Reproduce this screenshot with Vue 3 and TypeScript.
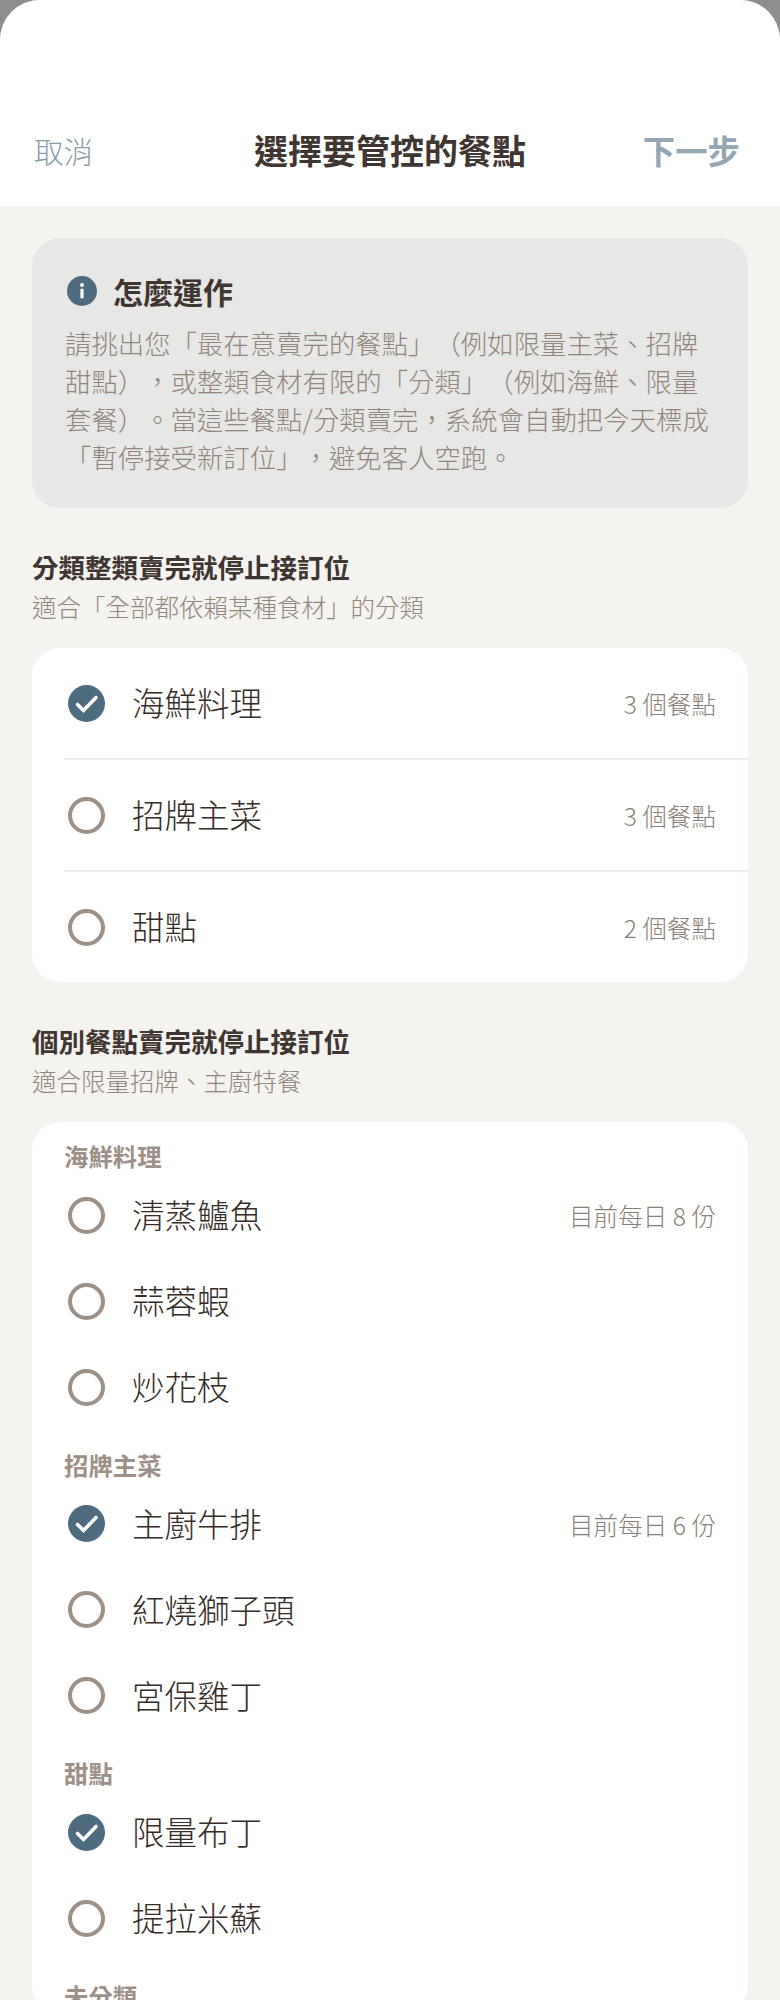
<script setup lang="ts">
interface Row { name: string; note?: string; checked?: boolean }
interface Group { label: string; rows: Row[] }

const categories: Row[] = [
  { name: '海鮮料理', note: '3 個餐點', checked: true },
  { name: '招牌主菜', note: '3 個餐點' },
  { name: '甜點', note: '2 個餐點' },
]

const groups: Group[] = [
  { label: '海鮮料理', rows: [{ name: '清蒸鱸魚', note: '目前每日 8 份' }, { name: '蒜蓉蝦' }, { name: '炒花枝' }] },
  { label: '招牌主菜', rows: [{ name: '主廚牛排', note: '目前每日 6 份', checked: true }, { name: '紅燒獅子頭' }, { name: '宮保雞丁' }] },
  { label: '甜點', rows: [{ name: '限量布丁', checked: true }, { name: '提拉米蘇' }] },
  { label: '未分類', rows: [] },
]
</script>

<template>
  <div class="page" lang="zh-Hant">
    <div class="sheet">
      <header class="nav">
        <span class="cancel">取消</span>
        <h1 class="title">選擇要管控的餐點</h1>
        <span class="next">下一步</span>
      </header>
      <main class="body">
        <section class="info">
          <div class="info-head">
            <svg class="info-icon" viewBox="0 0 30 30" aria-hidden="true">
              <circle cx="15" cy="15" r="15" fill="#4f6b7f" />
              <circle cx="15" cy="9" r="2" fill="#fff" />
              <rect x="13.4" y="12.8" width="3.2" height="9.4" rx="0.6" fill="#fff" />
            </svg>
            <h2 class="info-title">怎麼運作</h2>
          </div>
          <p class="info-text">請挑出您「最在意賣完的餐點」（例如限量主菜、招牌甜點），或整類食材有限的「分類」（例如海鮮、限量套餐）。當這些餐點/分類賣完，系統會自動把今天標成「暫停接受新訂位」，避免客人空跑。</p>
        </section>

        <h3 class="sec-title first">分類整類賣完就停止接訂位</h3>
        <p class="sec-sub">適合「全部都依賴某種食材」的分類</p>
        <div class="card">
          <div v-for="row in categories" :key="row.name" class="cat-row">
            <svg class="radio" viewBox="0 0 37 37" aria-hidden="true">
              <template v-if="row.checked">
                <circle cx="18.5" cy="18.5" r="18.5" fill="#4f6b7f" />
                <path d="M9.5 19.5l6 6L28 12.5" fill="none" stroke="#fff" stroke-width="3.6" stroke-linecap="round" stroke-linejoin="miter" />
              </template>
              <circle v-else cx="18.5" cy="18.5" r="16.5" fill="none" stroke="#9c9087" stroke-width="4" />
            </svg>
            <span class="row-name">{{ row.name }}</span>
            <span class="row-note">{{ row.note }}</span>
          </div>
        </div>

        <h3 class="sec-title second">個別餐點賣完就停止接訂位</h3>
        <p class="sec-sub">適合限量招牌、主廚特餐</p>
        <div class="card items">
          <div v-for="group in groups" :key="group.label" class="group">
            <div class="group-label">{{ group.label }}</div>
            <div class="group-rows">
              <div v-for="row in group.rows" :key="row.name" class="item-row">
                <svg class="radio" viewBox="0 0 37 37" aria-hidden="true">
                  <template v-if="row.checked">
                    <circle cx="18.5" cy="18.5" r="18.5" fill="#4f6b7f" />
                    <path d="M9.5 19.5l6 6L28 12.5" fill="none" stroke="#fff" stroke-width="3.6" stroke-linecap="round" stroke-linejoin="miter" />
                  </template>
                  <circle v-else cx="18.5" cy="18.5" r="16.5" fill="none" stroke="#9c9087" stroke-width="4" />
                </svg>
                <span class="row-name">{{ row.name }}</span>
                <span v-if="row.note" class="row-note">{{ row.note }}</span>
              </div>
            </div>
          </div>
        </div>
      </main>
    </div>
  </div>
</template>

<style>
html, body { margin: 0; background: #8e8e8e; }
</style>

<style scoped>
.page {
  width: 780px;
  height: 2000px;
  overflow: hidden;
  background: #8e8e8e;
  font-family: "Noto Sans CJK TC", "Noto Sans", sans-serif;
  text-spacing-trim: space-all;
}
.sheet {
  border-radius: 40px 40px 0 0;
  overflow: hidden;
  background: #f4f3f0;
}
.nav {
  height: 206px;
  box-sizing: border-box;
  padding: 124px 34px 0;
  background: #fff;
  display: grid;
  grid-template-columns: 1fr auto 1fr;
  align-items: center;
  align-content: start;
}
.cancel { margin-top: 1px; font-size: 29.5px; line-height: 50px; font-weight: 300; color: #879ca9; }
.title { margin: 0; font-size: 34px; line-height: 50px; font-weight: 700; color: #3f3631; }
.next { justify-self: end; margin-right: 6px; font-size: 32.4px; line-height: 50px; font-weight: 700; color: #93a6b2; }
.body { padding: 32px 32px 0; }
.info {
  height: 270px;
  box-sizing: border-box;
  padding: 32px 34px 0 33px;
  border-radius: 28px;
  background: #e7e7e5;
}
.info-head { display: flex; align-items: center; gap: 16px; height: 42px; }
.info-icon { width: 30px; height: 30px; flex: none; margin-left: 2px; }
.info-title { margin: 0; font-size: 30px; line-height: 42px; font-weight: 700; color: #3f3631; }
.info-text { margin: 12px 0 0; font-size: 26.4px; line-height: 38px; font-weight: 300; color: #91857c; }
.sec-title { margin: 0; font-size: 26.5px; line-height: 38px; font-weight: 700; color: #3f3631; }
.sec-title.first { margin-top: 40px; }
.sec-title.second { margin-top: 40px; }
.sec-sub { margin: 2px 0 0; font-size: 24.5px; line-height: 38px; font-weight: 300; color: #91857c; }
.card {
  margin-top: 22px;
  border-radius: 28px;
  background: #fff;
}
.cat-row {
  height: 110px;
  margin-left: 32px;
  padding: 0 32px 0 4px;
  display: flex;
  align-items: center;
  border-bottom: 2px solid #eeeeec;
}
.cat-row:last-child { border-bottom: 0; }
.radio { width: 37px; height: 37px; flex: none; }
.row-name { margin-left: 27px; margin-bottom: 2px; font-size: 32.5px; line-height: 44px; font-weight: 300; color: #352c27; }
.row-note { margin-left: auto; font-size: 24.6px; line-height: 34px; font-weight: 300; color: #8a7f76; }
.items { padding: 17px 32px 0; }
.group + .group { margin-top: 19.5px; }
.group-label { height: 34px; font-size: 24.4px; line-height: 34px; font-weight: 700; color: #9c9087; }
.group-rows { display: flex; flex-direction: column; gap: 4px; margin-top: 1px; }
.item-row { height: 82px; padding-left: 4px; display: flex; align-items: center; }
</style>
